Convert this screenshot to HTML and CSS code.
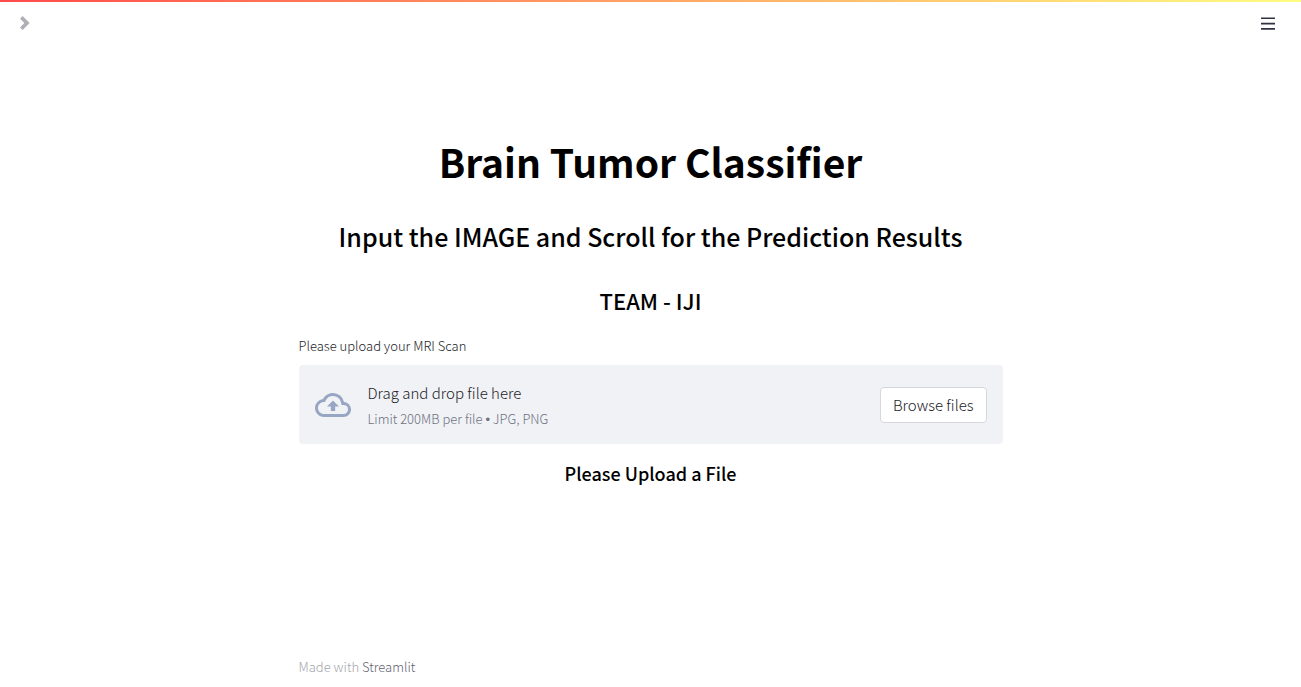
FILE: index.html
```html
<!DOCTYPE html>
<html lang="en">
<head>
<meta charset="utf-8">
<title>Brain Tumor Classifier</title>
<link rel="stylesheet" href="styles.css">
</head>
<body>
<div class="decoration"></div>
<header class="toolbar">
  <button class="icon-button" type="button" aria-label="Open sidebar">
    <svg class="chevron" viewBox="0 0 8 8"><path d="M1.500 0L0 1.500 2.500 4 0 6.500 1.500 8 5.500 4z"/></svg>
  </button>
  <button class="icon-button" type="button" aria-label="Main menu">
    <svg class="menu" viewBox="0 0 14 14"><path d="M0 1.400h14v1.700H0zM0 6.700h14v1.700H0zM0 12h14v1.800H0z"/></svg>
  </button>
</header>
<main class="content">
  <h1>Brain Tumor Classifier</h1>
  <h2>Input the IMAGE and Scroll for the Prediction Results</h2>
  <h3 class="team">TEAM - IJI</h3>
  <label class="upload-label" for="browse">Please upload your MRI Scan</label>
  <section class="dropzone">
    <svg class="cloud" viewBox="0 0 24 24"><path d="M19.350 10.040A7.490 7.490 0 0 0 12 4C9.110 4 6.600 5.640 5.350 8.040A5.994 5.994 0 0 0 0 14c0 3.310 2.690 6 6 6h13c2.760 0 5-2.240 5-5 0-2.640-2.050-4.780-4.650-4.960zM19 18H6c-2.210 0-4-1.790-4-4 0-2.050 1.530-3.760 3.560-3.970l1.070-.11.5-.95A5.469 5.469 0 0 1 12 6c2.620 0 4.880 1.860 5.390 4.430l.3 1.500 1.530.11A2.980 2.980 0 0 1 22 15c0 1.650-1.350 3-3 3zM8 13h2.550v3h2.900v-3H16l-4-4z"/></svg>
    <div class="instructions">
      <span class="prompt">Drag and drop file here</span>
      <small class="limit">Limit 200MB per file <span class="bullet">•</span> JPG, PNG</small>
    </div>
    <button class="browse" id="browse" type="button">Browse files</button>
  </section>
  <h4>Please Upload a File</h4>
</main>
<footer class="footer">Made with <a href="#">Streamlit</a></footer>
</body>
</html>
```
FILE: styles.css
```css
* { box-sizing: border-box; }
body {
  margin: 0;
  min-height: 100vh;
  display: flex;
  flex-direction: column;
  background: #fff;
  color: #1c1d27;
  font-family: "Source Sans Pro", "Noto Sans CJK SC", "Noto Sans", sans-serif;
  font-size: 15px;
  font-weight: 300;
  line-height: 24px;
}
.decoration {
  height: 2px;
  background: linear-gradient(90deg, #ff4b4b, #fffd80);
}
.toolbar {
  display: flex;
  justify-content: space-between;
  align-items: center;
  height: 42px;
  padding: 0 26px 0 20px;
}
.icon-button {
  display: flex;
  padding: 0;
  border: 0;
  background: none;
}
.chevron { width: 14px; height: 14px; fill: #afb0b6; }
.menu { width: 14px; height: 14px; fill: #31333f; }
.content {
  flex: 1;
  display: flex;
  flex-direction: column;
  width: 100%;
  max-width: 736px;
  margin: 0 auto;
  padding: 92px 16px 0;
}
h1, h2, h3, h4 { margin: 0; color: #000; text-align: center; }
h1 { font-size: 39px; font-weight: 700; line-height: 50px; }
h2 { margin-top: 34px; font-size: 25px; font-weight: 500; line-height: 32px; }
.team { margin-top: 32px; font-size: 22px; font-weight: 500; line-height: 32px; }
.upload-label { margin-top: 18px; font-size: 13px; line-height: 24px; }
.dropzone {
  display: flex;
  align-items: center;
  gap: 17px;
  margin-top: 7px;
  padding: 16px;
  border-radius: 4px;
  background: #f0f2f6;
}
.cloud { width: 36px; height: 36px; fill: #97a6c3; }
.instructions { flex: 1; display: flex; flex-direction: column; gap: 4px; }
.prompt { line-height: 24px; }
.limit { color: #6f7180; font-size: 13px; line-height: 19px; }
.bullet { font-family: "Liberation Sans", sans-serif; line-height: 1; }
.browse {
  padding: 5px 12px;
  border: 1px solid #d6d7dd;
  border-radius: 4px;
  background: #fff;
  color: #1c1d27;
  font: inherit;
}
h4 { margin-top: 16px; font-size: 18px; font-weight: 500; line-height: 26px; }
.footer {
  width: 100%;
  max-width: 736px;
  margin: 0 auto;
  padding: 8px 16px;
  color: #a5a6ad;
  font-size: 13px;
}
.footer a { color: #5f6272; text-decoration: none; }
```
